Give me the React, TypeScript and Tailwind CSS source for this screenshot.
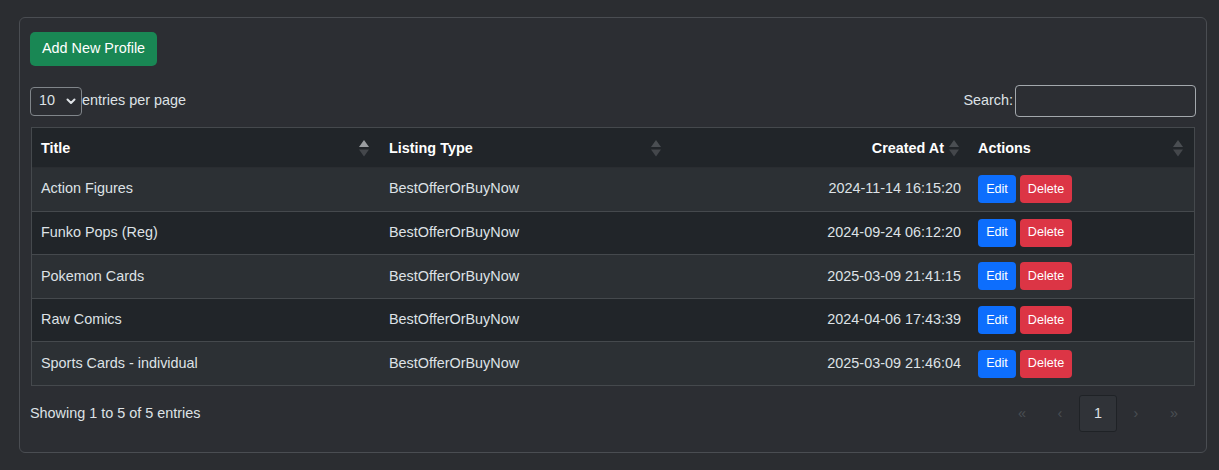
import React from "react";

const rows = [
  ["Action Figures", "BestOfferOrBuyNow", "2024-11-14 16:15:20"],
  ["Funko Pops (Reg)", "BestOfferOrBuyNow", "2024-09-24 06:12:20"],
  ["Pokemon Cards", "BestOfferOrBuyNow", "2025-03-09 21:41:15"],
  ["Raw Comics", "BestOfferOrBuyNow", "2024-04-06 17:43:39"],
  ["Sports Cards - individual", "BestOfferOrBuyNow", "2025-03-09 21:46:04"],
];

function SortIcon({ active = false }: { active?: boolean }) {
  return (
    <svg width="10" height="17" viewBox="0 0 10 17" className="shrink-0">
      <polygon points="5,0 10,7 0,7" fill={active ? "#9a9da0" : "#4a4e52"} />
      <polygon points="0,9.5 10,9.5 5,16.5" fill="#44474b" />
    </svg>
  );
}

export default function App() {
  return (
    <div
      className="min-h-[470px] bg-[#2b2d31] pt-[17px] pl-[19px] pr-[12px] text-[14.4px] text-[#dee2e6]"
      style={{ fontFamily: '"Liberation Sans", Arial, sans-serif' }}
    >
      <div className="h-[436px] rounded-[6px] border border-[#4a4d52] bg-[#2c2e33] px-[10px] pt-[14px]">
        <button className="h-[34px] w-[127px] rounded-[5px] bg-[#198754] text-[14.4px] text-white">
          Add New Profile
        </button>

        <div className="mt-[19px] flex h-[32px] items-center justify-between">
          <div className="flex items-center">
            <div className="relative flex h-[29px] w-[52px] items-center rounded-[4px] border border-[#80858a] pl-[8px]">
              <span>10</span>
              <svg
                width="10"
                height="7"
                viewBox="0 0 10 7"
                className="absolute right-[5px] top-[10px]"
              >
                <path d="M1.5 1.5 L5 5 L8.5 1.5" stroke="#dee2e6" strokeWidth="2" fill="none" strokeLinecap="round" strokeLinejoin="round" />
              </svg>
            </div>
            <span>entries per page</span>
          </div>
          <div className="flex items-center gap-[2px]">
            <span>Search:</span>
            <div className="h-[32px] w-[181px] rounded-[4px] border border-[#a3a8ad] bg-[#2c2e33]" />
          </div>
        </div>

        <div className="mx-[1px] mt-[10px] border border-[#45494d]">
          <div className="flex h-[39px] items-center bg-[#212529] pt-[2px] font-bold text-white">
            <div className="flex w-[348px] items-center justify-between pl-[9px] pr-[11px]">
              <span>Title</span>
              <SortIcon active />
            </div>
            <div className="flex w-[292px] items-center justify-between pl-[9px] pr-[11px]">
              <span>Listing Type</span>
              <SortIcon />
            </div>
            <div className="flex w-[297px] items-center justify-end gap-[5px] pr-[10px]">
              <span>Created At</span>
              <SortIcon />
            </div>
            <div className="flex flex-1 items-center justify-between pl-[9px] pr-[11px]">
              <span>Actions</span>
              <SortIcon />
            </div>
          </div>
          {rows.map((r, i) => (
            <div
              key={i}
              className={`flex h-[43.6px] items-center border-t ${i > 0 ? "border-[#45494d]" : "border-[#2a2d31]"} ${
                i % 2 === 0 ? "bg-[#2c3034]" : "bg-[#212529]"
              }`}
            >
              <div className="w-[348px] pl-[9px]">{r[0]}</div>
              <div className="w-[292px] pl-[9px]">{r[1]}</div>
              <div className="w-[297px] pr-[8px] text-right">{r[2]}</div>
              <div className="flex flex-1 items-center gap-[4px] pl-[9px]">
                <button className="h-[28px] w-[38px] rounded-[4px] bg-[#0d6efd] text-[12.6px] text-white">
                  Edit
                </button>
                <button className="h-[28px] w-[52px] rounded-[4px] bg-[#dc3545] text-[12.6px] text-white">
                  Delete
                </button>
              </div>
            </div>
          ))}
        </div>

        <div className="mt-[9px] flex h-[37px] items-center justify-between">
          <span className="pt-[1px]">Showing 1 to 5 of 5 entries</span>
          <div className="mr-[3px] flex items-center text-[#4a4e53]">
            <span className="w-[38px] text-center">«</span>
            <span className="w-[38px] text-center">‹</span>
            <span className="flex h-[37px] w-[38px] items-center justify-center rounded-[3px] border border-[#1f2226] bg-[#303338] text-[#dee2e6]">
              1
            </span>
            <span className="w-[38px] text-center">›</span>
            <span className="w-[38px] text-center">»</span>
          </div>
        </div>
      </div>
    </div>
  );
}
